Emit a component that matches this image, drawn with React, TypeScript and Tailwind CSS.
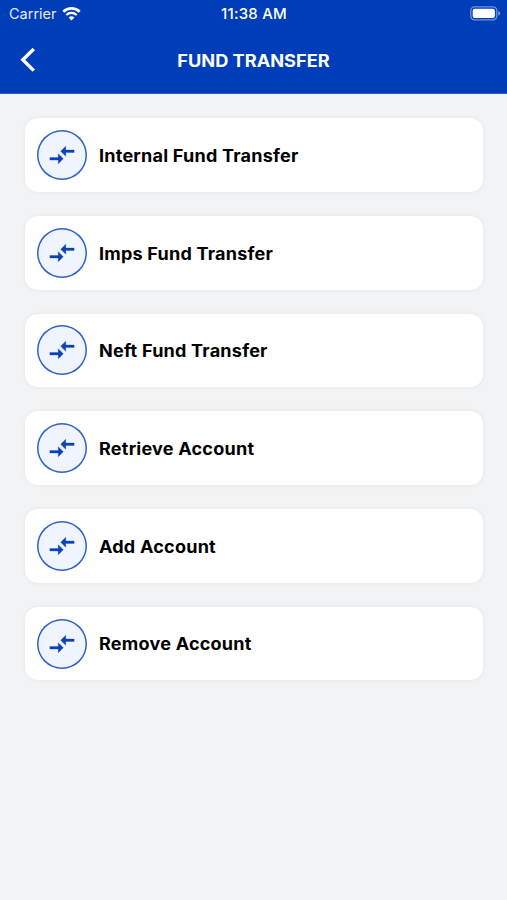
interface OptionCardProps {
  label: string;
}

const options = [
  'Internal Fund Transfer',
  'Imps Fund Transfer',
  'Neft Fund Transfer',
  'Retrieve Account',
  'Add Account',
  'Remove Account',
];

function WifiIcon() {
  return (
    <svg width="19" height="14" viewBox="0 0 19 14" fill="none" stroke="white">
      <path d="M1.3 4.7a11.8 11.8 0 0 1 16.4 0" strokeWidth="2.6" />
      <path d="M4.3 8a7.6 7.6 0 0 1 10.4 0" strokeWidth="2.3" />
      <path d="M9.5 13.5 6.6 10.6a4.2 4.2 0 0 1 5.8 0Z" fill="white" stroke="none" />
    </svg>
  );
}

function BatteryIcon() {
  return (
    <svg width="31" height="15" viewBox="0 0 31 15" fill="none">
      <rect x="0.8" y="0.8" width="26" height="13" rx="3.8" stroke="white" strokeOpacity="0.45" strokeWidth="1.3" />
      <rect x="2.7" y="2.7" width="22.2" height="9.2" rx="2" fill="white" />
      <path d="M28.3 5c2.5.8 2.5 3.8 0 4.6Z" fill="white" fillOpacity="0.5" />
    </svg>
  );
}

function TransferIcon() {
  return (
    <svg width="30" height="30" viewBox="0 0 24 24" fill="#0b42ba" stroke="#0b42ba" strokeWidth="0.25">
      <path d="M9.01 14H2.3v2h6.71v3L13 15l-3.99-4zM14.99 13v-3h6.71V8h-6.71V5L11 9z" />
    </svg>
  );
}

function StatusBar() {
  return (
    <div className="grid h-[27px] grid-cols-3 items-center pl-[9px] pr-[6px] text-[15px] text-white">
      <div className="flex items-center gap-[5px]">
        <span className="pt-px text-[14.5px] opacity-90">Carrier</span>
        <WifiIcon />
      </div>
      <span className="-ml-[2px] pt-px text-center font-medium tracking-[0.2px]">11:38 AM</span>
      <div className="flex justify-end">
        <BatteryIcon />
      </div>
    </div>
  );
}

function Header() {
  return (
    <header className="h-[94px] border-b border-[#2e5fc4] bg-[#003db8] font-['Inter',sans-serif] text-white">
      <StatusBar />
      <div className="grid h-[66px] grid-cols-[40px_1fr_40px] items-center">
        <button className="pl-5" aria-label="Back">
          <svg width="16" height="26" viewBox="0 0 16 26" fill="none" stroke="white" strokeWidth="3.4">
            <path d="M13.8 2 2.8 12.8l11 10.8" />
          </svg>
        </button>
        <h1 className="scale-x-[1.07] pt-[3px] text-center text-[17px] font-bold">FUND TRANSFER</h1>
      </div>
    </header>
  );
}

function OptionCard({ label }: OptionCardProps) {
  return (
    <button className="flex h-[73.6px] w-full items-center rounded-[13px] bg-white px-3 text-left shadow-[0_0_5px_rgba(0,0,0,0.06)]">
      <span className="flex size-[50px] shrink-0 items-center justify-center rounded-full bg-[#f0f4fe] shadow-[inset_0_0_0_1.5px_#2f62c8]">
        <TransferIcon />
      </span>
      <span className="ml-3 origin-left scale-x-[1.062] whitespace-nowrap pt-[3px] text-[17px] font-bold tracking-[0.2px] text-black">
        {label}
      </span>
    </button>
  );
}

export default function App() {
  return (
    <div className="flex h-screen flex-col overflow-hidden bg-[#f1f3f5] font-['Inter',sans-serif]">
      <Header />
      <main className="flex flex-col gap-[24.1px] pl-[25px] pr-6 pt-[24.3px]">
        {options.map((label) => (
          <OptionCard key={label} label={label} />
        ))}
      </main>
    </div>
  );
}
